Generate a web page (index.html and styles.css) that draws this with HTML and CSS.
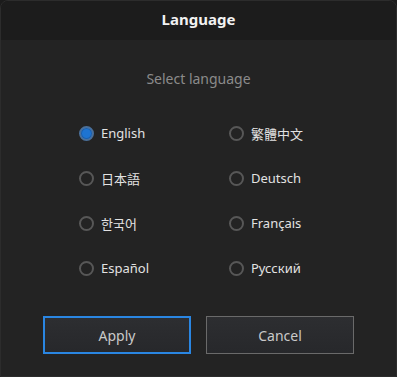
FILE: index.html
```html
<!DOCTYPE html>
<html lang="en">
<head>
  <meta charset="UTF-8" />
  <title>Language</title>
  <link rel="stylesheet" href="styles.css">
</head>
<body>
  <div class="dialog">
    <div class="title-bar">Language</div>
    <div class="content">
      <p class="hint">Select language</p>
      <div class="lang-grid">
        <label class="lang-item"><span class="radio checked"></span>English</label>
        <label class="lang-item"><span class="radio"></span>繁體中文</label>
        <label class="lang-item"><span class="radio"></span>日本語</label>
        <label class="lang-item"><span class="radio"></span>Deutsch</label>
        <label class="lang-item"><span class="radio"></span>한국어</label>
        <label class="lang-item"><span class="radio"></span>Français</label>
        <label class="lang-item"><span class="radio"></span>Español</label>
        <label class="lang-item"><span class="radio"></span>Русский</label>
      </div>
      <div class="actions">
        <button class="btn btn-primary">Apply</button>
        <button class="btn">Cancel</button>
      </div>
    </div>
  </div>
</body>
</html>
```

FILE: styles.css
```css
html, body {
  margin: 0;
  padding: 0;
  background: #1b1b1b;
}

body {
  width: 397px;
  height: 377px;
  font-family: "Noto Sans", "Noto Sans CJK SC", "Noto Sans CJK KR", sans-serif;
  color: #d8d8d8;
}

.dialog {
  box-sizing: border-box;
  width: 397px;
  height: 377px;
  border: 1px solid #2c2c2c;
  border-radius: 8px 8px 0 0;
  background: #1c1c1c;
  display: flex;
  flex-direction: column;
  overflow: hidden;
}

.title-bar {
  height: 39px;
  line-height: 37px;
  text-align: center;
  font-size: 15px;
  font-weight: bold;
  color: #f2f2f2;
  background: #1c1c1c;
  flex-shrink: 0;
}

.content {
  flex: 1;
  background: #232323;
  display: flex;
  flex-direction: column;
  align-items: center;
}

.hint {
  margin: 29px 0 0;
  font-size: 14px;
  color: #8b8b8b;
  line-height: 20px;
}

.lang-grid {
  display: grid;
  grid-template-columns: 150px 100px;
  row-gap: 25px;
  margin-top: 34px;
  margin-left: 11px;
}

.lang-item {
  display: flex;
  align-items: center;
  gap: 7px;
  height: 20px;
  font-size: 13px;
  color: #e2e2e2;
}

.radio {
  box-sizing: border-box;
  width: 15px;
  height: 15px;
  border-radius: 50%;
  border: 2px solid #575757;
  flex-shrink: 0;
}

.radio.checked {
  border-color: #4a6f99;
  background: #1e74d2;
  box-shadow: inset 0 0 0 1px #1a5fae;
}

.actions {
  display: flex;
  gap: 15px;
  margin-top: 38px;
}

.btn {
  box-sizing: border-box;
  width: 148px;
  height: 38px;
  background: linear-gradient(#2d2e31, #27282b);
  border: 1px solid #6a6a6a;
  color: #c9c9c9;
  font-family: inherit;
  font-size: 14px;
  padding: 0;
}

.btn-primary {
  border: 2px solid #2a86e2;
}
```
